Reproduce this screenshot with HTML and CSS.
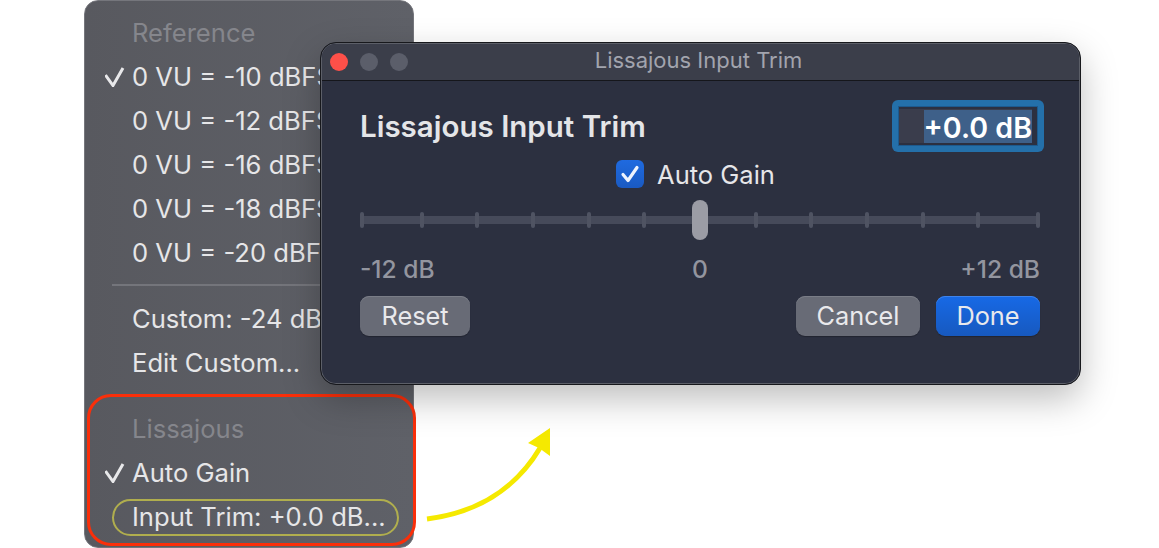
FILE: index.html
```html
<!DOCTYPE html>
<html lang="en">
<head>
<meta charset="utf-8">
<title>Lissajous Input Trim</title>
<link rel="stylesheet" href="styles.css">
</head>
<body>
<main class="canvas">
  <nav class="menu">
    <div class="row label">Reference</div>
    <div class="row"><svg class="check" viewBox="0 0 20 20"><polyline points="0.5,8 8,18.5 18,1"/></svg>0 VU = -10 dBFS</div>
    <div class="row">0 VU = -12 dBFS</div>
    <div class="row">0 VU = -16 dBFS</div>
    <div class="row">0 VU = -18 dBFS</div>
    <div class="row">0 VU = -20 dBFS</div>
    <div class="divider"></div>
    <div class="row">Custom: -24 dBFS</div>
    <div class="row">Edit Custom...</div>
    <div class="row label group">Lissajous</div>
    <div class="row"><svg class="check" viewBox="0 0 20 20"><polyline points="0.5,8 8,18.5 18,1"/></svg>Auto Gain</div>
    <div class="row">Input Trim: +0.0 dB...</div>
  </nav>
  <div class="mark-box"></div>
  <div class="mark-pill"></div>
  <svg class="mark-arrow" viewBox="0 0 160 120">
    <path class="arrow-line" d="M7 99 C55 93 95 70 120 28"/>
    <polygon class="arrow-head" points="130,8 108,23 119,28 130,36"/>
  </svg>
  <section class="window">
    <header class="titlebar">
      <span class="light close"></span>
      <span class="light"></span>
      <span class="light"></span>
      <span class="window-title">Lissajous Input Trim</span>
    </header>
    <div class="body">
      <div class="head">
        <h1>Lissajous Input Trim</h1>
        <div class="field"><div class="field-inner"><span class="selection">+0.0 dB</span></div></div>
      </div>
      <div class="auto">
        <span class="checkbox"><svg viewBox="0 0 28 28"><polyline points="7,14.5 12,20.5 21,7.5"/></svg></span>
        <span>Auto Gain</span>
      </div>
      <div class="slider">
        <i></i><i></i><i></i><i></i><i></i><i></i><i class="mid"></i><i></i><i></i><i></i><i></i><i></i><i></i>
        <span class="thumb"></span>
      </div>
      <div class="scale"><span>-12 dB</span><span>0</span><span>+12 dB</span></div>
      <div class="actions">
        <button class="btn reset">Reset</button>
        <button class="btn cancel">Cancel</button>
        <button class="btn done">Done</button>
      </div>
    </div>
  </section>
</main>
</body>
</html>
```
FILE: styles.css
```css
* { box-sizing: border-box; }
html, body { margin: 0; padding: 0; background: #fff; }
body { font-family: Inter, "Liberation Sans", sans-serif; }
.canvas { position: relative; width: 1159px; height: 548px; overflow: hidden; background: #fff; }

.menu {
  position: absolute; left: 84px; top: 0; width: 330px; height: 548px;
  padding-top: 10px;
  background: linear-gradient(90deg, #58595f 0%, #5f6168 100%);
  border: 1px solid #75767c;
  border-radius: 14px;
  overflow: hidden;
  color: #e6e6e8;
  font-size: 25.6px;
}
.row {
  position: relative; height: 44px; line-height: 44px;
  padding-left: 47px; white-space: nowrap;
}
.label { color: #85868c; }
.group { margin-top: 22px; }
.divider { height: 2px; margin: 9px 0 11px 27px; width: 270px; background: #74757b; }
.check {
  position: absolute; left: 20px; top: 12px; width: 20px; height: 20px;
  fill: none; stroke: #e8e8ea; stroke-width: 3;
}

.mark-box {
  position: absolute; left: 87px; top: 394px; width: 329px; height: 152px;
  border: 3px solid #fa2f0a; border-radius: 24px;
}
.mark-pill {
  position: absolute; left: 112px; top: 499px; width: 287px; height: 37px;
  border: 2px solid #b0ae4e; border-radius: 19px;
}
.mark-arrow { position: absolute; left: 420px; top: 420px; width: 160px; height: 120px; }
.arrow-line { fill: none; stroke: #f5e900; stroke-width: 5; }
.arrow-head { fill: #f5e900; }

.window {
  position: absolute; left: 320px; top: 42px; width: 761px; height: 343px;
  border: 1px solid #17181c; border-radius: 16px;
  background: #2c3040;
  box-shadow: inset 0 0 0 1px #5c5f68, 0 14px 36px rgba(0, 0, 0, .26);
  overflow: hidden;
}
.titlebar {
  position: relative; display: flex; align-items: center; gap: 12px;
  height: 37px; margin: 1px 1px 0; padding: 0 0 1px 8px;
  background: #3b3e4a; border-bottom: 1px solid #15161b;
  border-radius: 14px 14px 0 0;
}
.light { width: 18px; height: 18px; border-radius: 50%; background: #5b5e6a; }
.light.close { background: #fe5049; }
.window-title {
  position: absolute; left: 0; right: 0; top: 0; bottom: 0;
  display: flex; align-items: center; justify-content: center;
  padding-bottom: 4px; padding-right: 4px; font-size: 22px; color: #a2a4ae;
}
.body { padding: 19px 40px 0 39px; }
.head { display: flex; align-items: flex-start; justify-content: space-between; height: 53px; margin-right: -4px; }
h1 { margin: 8px 0 0; font-size: 29.5px; line-height: 36px; font-weight: 600; color: #e4e5e8; }
.field {
  width: 152px; height: 52px; padding: 6px;
  background: #2470aa; border-radius: 6px;
}
.field-inner {
  height: 40px; display: flex; align-items: center; justify-content: flex-end;
  padding: 2px 5px 2px 0;
  background: linear-gradient(#3a3d4c, #3a3d4c) content-box, #2c3040;
  border: 1px solid #1d5a8e;
}
.selection {
  height: 33px; line-height: 35px; flex: none;
  background: #3e6089; color: #fff; font-size: 28.6px; font-weight: 600; white-space: nowrap;
}
.auto {
  display: flex; align-items: center; justify-content: center; gap: 13px;
  height: 28px; margin-top: 7px; margin-right: 9px;
  font-size: 25.5px; color: #e6e6e9;
}
.checkbox {
  width: 28px; height: 28px; border-radius: 6px;
  background: linear-gradient(#1f6ae0, #1a5ac2);
}
.checkbox svg { display: block; width: 28px; height: 28px; fill: none; stroke: #eef3fd; stroke-width: 3.2; stroke-linecap: round; stroke-linejoin: round; }
.slider {
  position: relative; display: flex; justify-content: space-between; align-items: center;
  height: 40px; margin-top: 12px;
}
.slider::before {
  content: ""; position: absolute; left: 0; right: 0; top: 16px; height: 8px; background: #464a5a;
}
.slider i { position: relative; width: 4px; height: 16px; border-radius: 2px; background: #4f5362; }
.slider i:first-child { margin-right: 4px; }
.slider i:nth-last-child(2) { margin-left: 4px; }
.slider .mid { visibility: hidden; }
.thumb {
  position: absolute; left: 332px; top: 0; width: 16px; height: 40px;
  border-radius: 8px; background: #9b9ca5;
}
.scale {
  display: grid; grid-template-columns: 1fr auto 1fr; align-items: center;
  height: 30px; margin-top: 14px;
  font-size: 24.6px; font-weight: 500; color: #93959f;
}
.scale span:last-child { text-align: right; }
.actions { display: flex; gap: 16px; margin-top: 12px; }
.btn {
  height: 40px; padding: 0 0 2px; border: 0; border-radius: 9px;
  font-family: inherit; font-size: 25.3px; color: #e9e9ec;
  background: #686b76; box-shadow: inset 0 1px 0 #7a7d87, 0 1px 1px rgba(0, 0, 0, .25);
}
.reset { width: 110px; margin-right: auto; }
.cancel { width: 124px; }
.done { width: 104px; background: linear-gradient(#1769e6, #1759bf); box-shadow: inset 0 1px 0 #3f83ea, 0 1px 1px rgba(0, 0, 0, .25); }
```
